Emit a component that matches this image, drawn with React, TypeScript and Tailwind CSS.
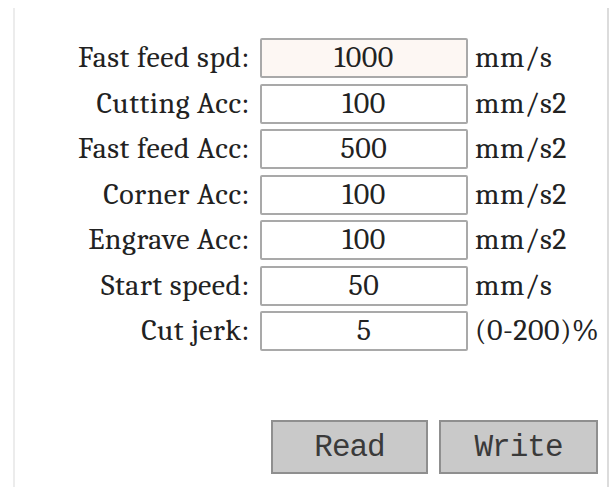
import React from 'react';

interface Param {
  label: string;
  value: string;
  unit: string;
}

const PARAMS: Param[] = [
  { label: 'Fast feed spd:', value: '1000', unit: 'mm/s' },
  { label: 'Cutting Acc:', value: '100', unit: 'mm/s2' },
  { label: 'Fast feed Acc:', value: '500', unit: 'mm/s2' },
  { label: 'Corner Acc:', value: '100', unit: 'mm/s2' },
  { label: 'Engrave Acc:', value: '100', unit: 'mm/s2' },
  { label: 'Start speed:', value: '50', unit: 'mm/s' },
  { label: 'Cut jerk:', value: '5', unit: '(0-200)%' },
];

export default function App() {
  return (
    <div className="w-[612px] h-[487px] bg-white overflow-hidden pt-[8px]">
      <div className="ml-[13px] w-[596px] h-[479px] border-l-2 border-r-2 border-l-[#ececec] border-r-[#dcdcdc] pt-[30px]">
        {/* Parameter rows */}
        <div className="flex flex-col gap-y-[5.5px] font-serif text-[30px] tracking-[0.5px] text-[#222]">
          {PARAMS.map((p, i) => (
            <div key={p.label} className="flex items-center h-[40px]">
              <div className="w-[235px] text-right whitespace-nowrap leading-none">{p.label}</div>
              <div
                className={`ml-[10px] w-[208px] h-[40px] flex items-center justify-center border-2 border-[#a9a9a9] rounded-[2px] leading-none ${
                  i === 0 ? 'bg-[#fdf7f3]' : 'bg-white'
                }`}
              >
                {p.value}
              </div>
              <div className="ml-[7px] whitespace-nowrap leading-none">{p.unit}</div>
            </div>
          ))}
        </div>

        {/* Buttons */}
        <div className="flex gap-x-[11px] ml-[256px] mt-[69px] font-mono">
          <button className="w-[157px] h-[54px] bg-[#c9c9c9] border-2 border-[#8f8f8f] text-[31px] tracking-[-1px] text-[#3a3a3a] leading-none">
            Read
          </button>
          <button className="w-[159px] h-[54px] bg-[#c9c9c9] border-2 border-[#8f8f8f] text-[31px] tracking-[-1px] text-[#3a3a3a] leading-none">
            Write
          </button>
        </div>
      </div>
    </div>
  );
}
